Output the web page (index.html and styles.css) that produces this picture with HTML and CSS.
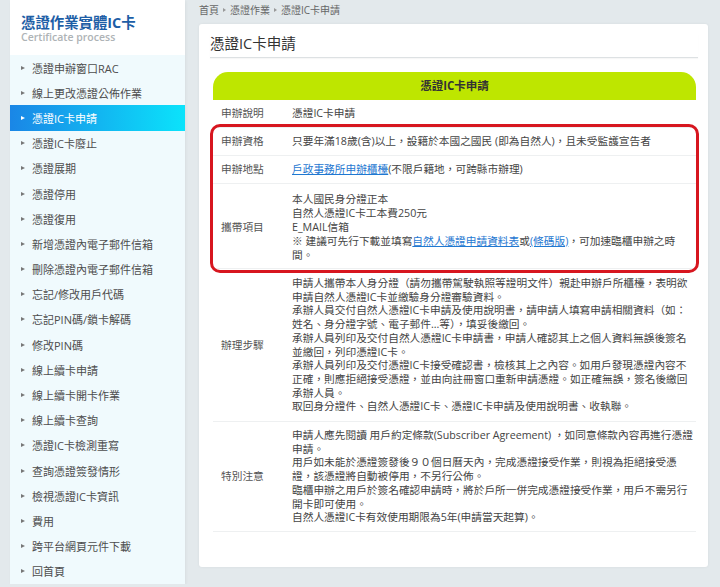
FILE: index.html
```html
<!DOCTYPE html>
<html lang="zh-Hant">
<head>
<meta charset="utf-8">
<title>憑證IC卡申請</title>
<link rel="stylesheet" href="styles.css">
</head>
<body>
<div class="page">
  <aside class="sidebar">
    <div class="side-head">
      <div class="side-title">憑證作業實體IC卡</div>
      <div class="side-sub">Certificate process</div>
    </div>
    <ul class="menu">
      <li>憑證申辦窗口RAC</li>
      <li>線上更改憑證公佈作業</li>
      <li class="active">憑證IC卡申請</li>
      <li>憑證IC卡廢止</li>
      <li>憑證展期</li>
      <li>憑證停用</li>
      <li>憑證復用</li>
      <li>新增憑證內電子郵件信箱</li>
      <li>刪除憑證內電子郵件信箱</li>
      <li>忘記/修改用戶代碼</li>
      <li>忘記PIN碼/鎖卡解碼</li>
      <li>修改PIN碼</li>
      <li>線上續卡申請</li>
      <li>線上續卡開卡作業</li>
      <li>線上續卡查詢</li>
      <li>憑證IC卡檢測重寫</li>
      <li>查詢憑證簽發情形</li>
      <li>檢視憑證IC卡資訊</li>
      <li>費用</li>
      <li>跨平台網頁元件下載</li>
      <li>回首頁</li>
    </ul>
  </aside>
  <main class="main">
    <nav class="crumb">首頁<span class="sep"></span>憑證作業<span class="sep"></span>憑證IC卡申請</nav>
    <section class="card">
      <h1 class="title">憑證IC卡申請</h1>
      <div class="table">
        <div class="thead">憑證IC卡申請</div>
        <div class="row"><div class="label">申辦說明</div><div class="cell">憑證IC卡申請</div></div>
        <div class="hl">
          <div class="row"><div class="label">申辦資格</div><div class="cell">只要年滿18歲(含)以上，設籍於本國之國民 (即為自然人)，且未受監護宣告者</div></div>
          <div class="row"><div class="label">申辦地點</div><div class="cell"><a class="link">戶政事務所申辦櫃檯</a>(不限戶籍地，可跨縣市辦理)</div></div>
          <div class="row row-carry"><div class="label">攜帶項目</div><div class="cell">
            <p>本人國民身分證正本</p>
            <p>自然人憑證IC卡工本費250元</p>
            <p>E_MAIL信箱</p>
            <p>※ 建議可先行下載並填寫<a class="link">自然人憑證申請資料表</a>或<a class="link">(條碼版)</a>，可加速臨櫃申辦之時間。</p>
          </div></div>
        </div>
        <div class="row row-steps"><div class="label">辦理步驟</div><div class="cell">
          <p>申請人攜帶本人身分證（請勿攜帶駕駛執照等證明文件）親赴申辦戶所櫃檯，表明欲申請自然人憑證IC卡並繳驗身分證審驗資料。</p>
          <p>承辦人員交付自然人憑證IC卡申請及使用說明書，請申請人填寫申請相關資料（如：姓名、身分證字號、電子郵件...等），填妥後繳回。</p>
          <p>承辦人員列印及交付自然人憑證IC卡申請書，申請人確認其上之個人資料無誤後簽名並繳回，列印憑證IC卡。</p>
          <p>承辦人員列印及交付憑證IC卡接受確認書，檢核其上之內容。如用戶發現憑證內容不正確，則應拒絕接受憑證，並由向註冊窗口重新申請憑證。如正確無誤，簽名後繳回承辦人員。</p>
          <p>取回身分證件、自然人憑證IC卡、憑證IC卡申請及使用說明書、收執聯。</p>
        </div></div>
        <div class="row"><div class="label">特別注意</div><div class="cell">
          <p>申請人應先閱讀 用戶約定條款(Subscriber Agreement) ，如同意條款內容再進行憑證申請。</p>
          <p>用戶如未能於憑證簽發後９０個日曆天內，完成憑證接受作業，則視為拒絕接受憑證，該憑證將自動被停用，不另行公佈。</p>
          <p>臨櫃申辦之用戶於簽名確認申請時，將於戶所一併完成憑證接受作業，用戶不需另行開卡即可使用。</p>
          <p>自然人憑證IC卡有效使用期限為5年(申請當天起算)。</p>
        </div></div>
      </div>
    </section>
  </main>
</div>
</body>
</html>
```
FILE: styles.css
```css
html, body {
  margin: 0;
  padding: 0;
}
body {
  background: #e3e9ec;
  font-family: "Open Sans", "Noto Sans CJK TC", sans-serif;
  color: #444;
}
.page {
  display: flex;
  align-items: flex-start;
  padding-left: 10px;
}
.sidebar {
  width: 175px;
  flex: none;
  background: #f0fafd;
  box-shadow: 1px 1px 3px rgba(0, 0, 0, 0.05);
}
.side-head {
  background: #fff;
  height: 55px;
  box-sizing: border-box;
  padding: 14px 0 0 11px;
}
.side-title {
  font-size: 14.4px;
  font-weight: 700;
  color: #1d5ea6;
  line-height: 18px;
}
.side-sub {
  font-size: 10.5px;
  font-weight: 600;
  color: #aeb3b6;
  line-height: 12px;
  margin-top: -1px;
}
.menu {
  list-style: none;
  margin: 0;
  padding: 0;
}
.menu li {
  height: 25.2px;
  display: flex;
  align-items: center;
  padding-left: 11px;
  font-size: 11px;
  color: #4d4d4d;
}
.menu li::before {
  content: "";
  width: 0;
  height: 0;
  border-left: 4px solid #777;
  border-top: 2.5px solid transparent;
  border-bottom: 2.5px solid transparent;
  margin-right: 7px;
}
.menu li.active {
  background: linear-gradient(to right, #1a86e6, #0be3fb);
  color: #fff;
}
.menu li.active::before {
  border-left-color: #fff;
}
.main {
  margin-left: 14px;
  width: 509px;
  flex: none;
}
.crumb {
  height: 24px;
  line-height: 20px;
  font-size: 10px;
  color: #666;
  display: flex;
  align-items: flex-start;
}
.sep {
  display: inline-block;
  width: 0;
  height: 0;
  border-left: 3.5px solid #999;
  border-top: 2.5px solid transparent;
  border-bottom: 2.5px solid transparent;
  margin: 7.5px 4px 0 4px;
}
.card {
  background: #fff;
  border-radius: 3px;
  box-shadow: 0 0 3px rgba(0, 0, 0, 0.06);
  padding: 10px 10px 35px 11px;
}
.title {
  margin: 0;
  font-size: 14.5px;
  font-weight: 400;
  color: #333;
  line-height: 20px;
  padding-bottom: 3px;
  border-bottom: 1px solid #dde1e3;
  box-shadow: 0 1px 1px rgba(0, 0, 0, 0.03);
}
.table {
  margin: 14px 2px 0 3px;
}
.thead {
  height: 28px;
  line-height: 28px;
  background: #bee600;
  border-radius: 15px 15px 0 0;
  text-align: center;
  font-size: 11.5px;
  font-weight: 700;
  color: #333;
}
.row {
  display: grid;
  grid-template-columns: 79px 1fr;
  align-items: center;
  padding: 7px 0 6.3px;
  border-bottom: 1px solid #eef0f1;
  font-size: 10.7px;
  line-height: 13.7px;
}
.row-carry {
  padding: 8px 0 6px;
  line-height: 14px;
}
.row-steps {
  padding: 8px 0 7px;
}
.label {
  padding-left: 8px;
  color: #555;
}
.cell {
  color: #444;
}
.cell p {
  margin: 0;
}
.link {
  color: #1f78d1;
  text-decoration: underline;
}
.hl {
  position: relative;
}
.hl::after {
  content: "";
  position: absolute;
  top: -4px;
  bottom: -4px;
  left: -3px;
  right: -3px;
  border: 3px solid #d7161f;
  border-radius: 10px;
  pointer-events: none;
}
```
